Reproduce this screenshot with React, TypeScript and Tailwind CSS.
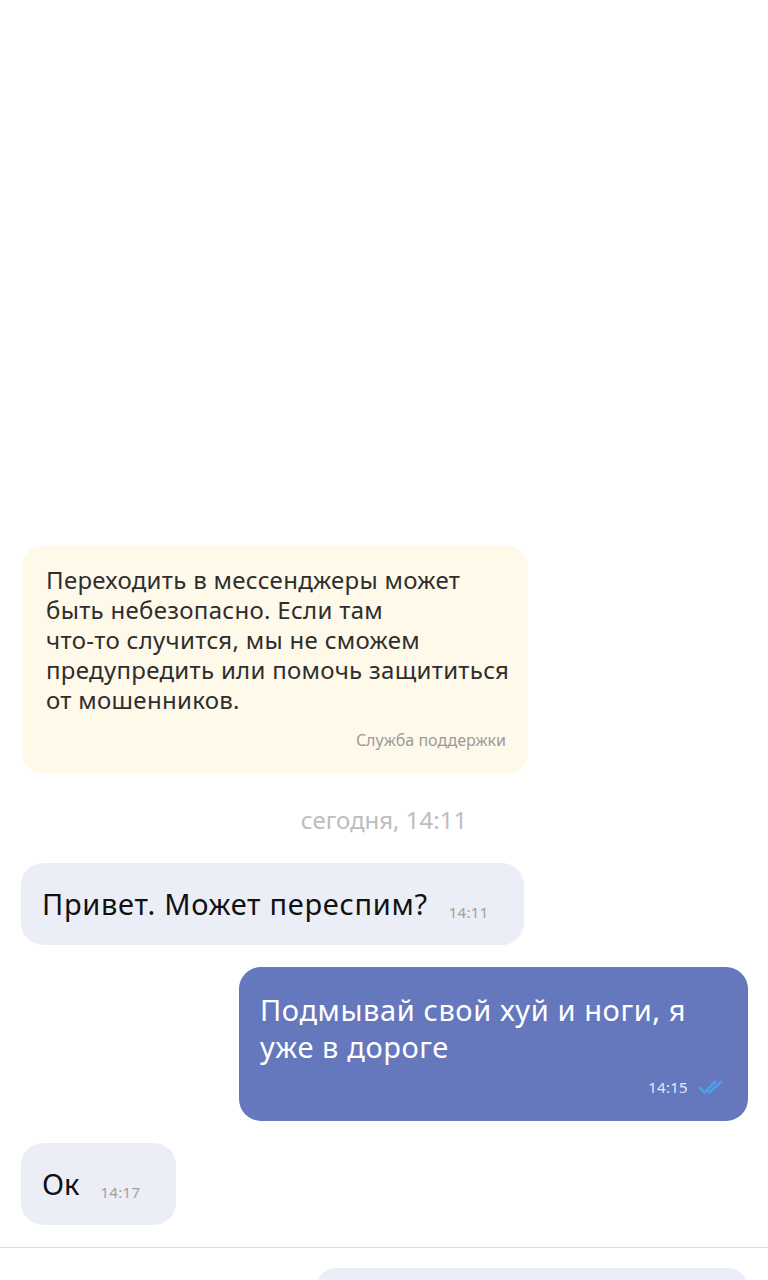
import React from "react";

function DoubleCheck() {
  return (
    <svg width="30" height="16" viewBox="0 0 30 16" fill="none">
      <path d="M3 9 L7.5 13.5 L18 3" stroke="#4ca0e8" strokeWidth="2.6" strokeLinecap="round" strokeLinejoin="round" />
      <path d="M11.5 12.5 L12.5 13.5 L24 3" stroke="#4ca0e8" strokeWidth="2.6" strokeLinecap="round" strokeLinejoin="round" />
    </svg>
  );
}

export default function App() {
  const font = { fontFamily: '"Noto Sans", Roboto, sans-serif' };
  return (
    <div className="flex h-[1280px] w-[768px] flex-col overflow-hidden bg-white" style={font}>
      <div className="flex flex-1 flex-col justify-end pb-[22px]">
        <div className="ml-[22px] w-[506px] rounded-[20px] bg-[#fef9e9] pl-[24px] pr-[22px] pt-[19px] pb-[23px]">
          <p className="text-[24px] leading-[30px] tracking-[0.3px] text-[#2e2e2e] whitespace-nowrap">
            Переходить в мессенджеры может
            <br />
            быть небезопасно. Если там
            <br />
            что‑то случится, мы не сможем
            <br />
            предупредить или помочь защититься
            <br />
            от мошенников.
          </p>
          <div className="mt-[15px] text-right text-[16px] leading-[20px] text-[#9b9b9b]">Служба поддержки</div>
        </div>

        <div className="mt-[31px] h-[32px] text-center text-[24px] leading-[32px] text-[#bdbdbd]">сегодня, 14:11</div>

        <div className="ml-[21px] mt-[27px] flex h-[82px] w-[503px] items-center rounded-[22px] bg-[#eceef7] pl-[21px]">
          <span className="whitespace-nowrap text-[29px] leading-[36px] tracking-[0.7px] text-[#111]">Привет. Может переспим?</span>
          <span className="ml-[21px] mt-[16px] text-[15px] leading-[18px] tracking-[0.3px] text-[#a0a0a0]">14:11</span>
        </div>

        <div className="mr-[20px] mt-[22px] flex w-[509px] flex-col self-end rounded-[22px] bg-[#6578be] pl-[21px] pr-[21px] pt-[24px] pb-[24px]">
          <p className="text-[29px] leading-[37px] tracking-[0.6px] text-white whitespace-nowrap">
            Подмывай свой хуй и ноги, я
            <br />
            уже в дороге
          </p>
          <div className="mt-[12px] flex h-[20px] items-center justify-end gap-[9px]">
            <span className="text-[15px] leading-[20px] tracking-[0.3px] text-[#e4e8f7]">14:15</span>
            <DoubleCheck />
          </div>
        </div>

        <div className="ml-[21px] mt-[22px] flex h-[82px] w-[155px] items-center rounded-[22px] bg-[#eceef7] pl-[21px]">
          <span className="text-[29px] leading-[36px] text-[#111]">Ок</span>
          <span className="ml-[21px] mt-[16px] text-[15px] leading-[18px] tracking-[0.3px] text-[#a0a0a0]">14:17</span>
        </div>
      </div>
      <div className="h-[33px] shrink-0 border-t border-[#dcdcdc]">
        <div className="ml-[316px] mt-[20px] h-[40px] w-[432px] rounded-[22px] bg-[#eceef7]" />
      </div>
    </div>
  );
}
